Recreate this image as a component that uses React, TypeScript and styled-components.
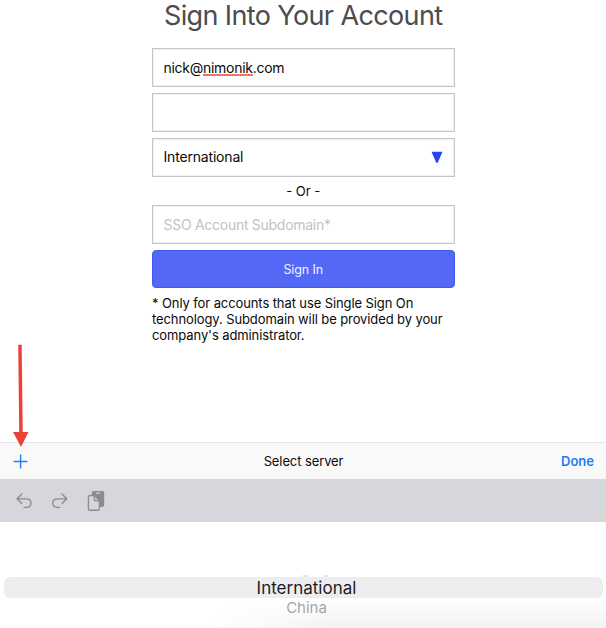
import React from 'react';
import styled, { createGlobalStyle } from 'styled-components';

const GlobalStyle = createGlobalStyle`
  * { box-sizing: border-box; }
  html, body { margin: 0; padding: 0; background: #fff; overflow: hidden; }
  body { font-family: Inter, "Liberation Sans", sans-serif; color: #0a0a0a; }
`;

const Screen = styled.div`
  position: relative;
  display: flex;
  flex-direction: column;
  width: 606px;
  height: 628px;
  overflow: hidden;
  background: #fff;
`;

const SignIn = styled.main`
  display: flex;
  flex-direction: column;
  width: 302.5px;
  height: 442px;
  margin-left: 152px;
`;

const Title = styled.h1`
  margin: 0 0 15px;
  height: 33px;
  font-size: 27px;
  line-height: 31px;
  font-weight: 400;
  letter-spacing: -0.62px;
  text-align: center;
  white-space: nowrap;
  color: #4c4c4e;
`;

const Field = styled.div<{ $last?: boolean; $muted?: boolean; $tracking?: number }>`
  display: flex;
  align-items: center;
  justify-content: space-between;
  flex: none;
  height: 39px;
  margin-bottom: ${(p) => (p.$last ? 0 : 6)}px;
  padding: 0 11px ${(p) => (p.$last ? 2 : 0)}px 10.5px;
  border: 1px solid #c6c6c6;
  outline: 1px solid #f0f0f0;
  outline-offset: -2px;
  font-size: 14px;
  letter-spacing: ${(p) => p.$tracking ?? -0.28}px;
  color: ${(p) => (p.$muted ? '#c2c2c4' : '#0a0a0a')};
`;

const Misspelled = styled.span`
  background: radial-gradient(circle, #f04848 0.9px, transparent 1.2px) 0 100% / 2.6px 2px repeat-x;
`;

const Divider = styled.div`
  height: 28px;
  line-height: 28px;
  font-size: 13px;
  text-align: center;
`;

const SubmitButton = styled.button`
  flex: none;
  height: 38px;
  margin: 0;
  padding: 0;
  border: 1px solid #405af0;
  border-radius: 4px;
  background: #5468f6;
  color: #f2f4ff;
  font-family: inherit;
  font-size: 12.5px;
  letter-spacing: -0.1px;
`;

const Note = styled.p`
  margin: 7px 0 0;
  font-size: 13px;
  line-height: 16.2px;
  letter-spacing: -0.1px;
  white-space: nowrap;
`;

const Accessory = styled.header`
  display: grid;
  grid-template-columns: 1fr auto 1fr;
  align-items: center;
  flex: none;
  height: 37px;
  padding: 0 12px 0 13px;
  border-top: 1px solid #e6e6e7;
  background: #f9f9f9;
  font-size: 13px;
  line-height: 16px;
  letter-spacing: -0.1px;
`;

const AccessoryTitle = styled.span`
  padding-bottom: 1px;
`;

const Done = styled.span`
  justify-self: end;
  padding-bottom: 1px;
  font-weight: 600;
  letter-spacing: 0;
  color: #237bf7;
`;

const EditBar = styled.div`
  display: flex;
  flex: none;
  height: 43px;
  background: #d6d7dc;
`;

const Picker = styled.section`
  position: relative;
  flex: 1;
  padding-top: 53px;
  text-align: center;
`;

const Shade = styled.div`
  position: absolute;
  right: 0;
  bottom: 0;
  width: 396px;
  height: 30px;
  background: linear-gradient(to bottom, rgba(0, 0, 0, 0), rgba(0, 0, 0, 0.05));
  mask-image: linear-gradient(to right, transparent, #000 120px);
`;

const ClippedOption = styled.svg`
  display: block;
  margin: 0 auto;
`;

const Selected = styled.div`
  height: 21px;
  margin: 0 3px 0 4px;
  padding-left: 6px;
  border-radius: 6px;
  background: #ededef;
  font-size: 17px;
  line-height: 23px;
  color: #1c1c1e;
`;

const Option = styled.div`
  position: relative;
  height: 20px;
  padding-left: 7px;
  line-height: 19px;
  font-size: 15px;
  color: #a5a5a7;
`;

const Arrow = styled.svg`
  position: absolute;
  left: 10px;
  top: 342px;
`;

export default function App() {
  return (
    <>
      <GlobalStyle />
      <Screen>
        <SignIn>
          <Title>Sign Into Your Account</Title>
          <Field>
            <span>nick@<Misspelled>nimonik</Misspelled>.com</span>
          </Field>
          <Field />
          <Field $last $tracking={-0.18}>
            <span>International</span>
            <svg width="12" height="12" viewBox="0 0 12 12">
              <path d="M0.5 .8H11.5L7 11.2Q6 12.4 5 11.2Z" fill="#2745f5" />
            </svg>
          </Field>
          <Divider>- Or -</Divider>
          <Field $muted>SSO Account Subdomain*</Field>
          <SubmitButton>Sign In</SubmitButton>
          <Note>
            * Only for accounts that use Single Sign On<br />
            technology. Subdomain will be provided by your<br />
            company's administrator.
          </Note>
        </SignIn>
        <Accessory>
          <svg width="15" height="15" viewBox="0 0 15 15" stroke="#237bf7" strokeWidth="1.4">
            <path d="M.7 7.5H14.5M7.6 .5V14.4" />
          </svg>
          <AccessoryTitle>Select server</AccessoryTitle>
          <Done>Done</Done>
        </Accessory>
        <EditBar>
          <svg width="120" height="43" viewBox="0 479 120 43" fill="none" stroke="#8b8b90" strokeWidth="1.35" strokeLinecap="round" strokeLinejoin="round">
            <path d="M21.8 494L17 498.8L21.8 503.5M17.3 498.8H26.5C29.5 498.8 31 500.7 31 503C31 505.5 29.3 507.3 26.5 507.3H24" />
            <path d="M62 494L66.8 498.8L62 503.5M66.5 498.8H57.3C54.3 498.8 52.8 500.7 52.8 503C52.8 505.5 54.5 507.3 57.3 507.3H59.7" />
            <path d="M93.5 491H102.3Q104.2 491 104.2 493V505Q104.2 507 102.3 507H98L91.8 500V493Q91.8 491 93.5 491Z" fill="#8b8b90" stroke="none" />
            <path d="M96.3 493.1H99.8" stroke="#d6d7dc" strokeWidth="1.1" />
            <path d="M90 495.5H94.5L99.4 500.5V508.5Q99.4 510.2 97.7 510.2H90Q88.4 510.2 88.4 508.5V497.2Q88.4 495.5 90 495.5Z" fill="#d6d7dc" />
            <path d="M94.3 495.8V499.3Q94.3 500.8 95.8 500.8H99.2" />
          </svg>
        </EditBar>
        <Picker>
          <Shade />
          <ClippedOption width="50" height="2" viewBox="278 575 50 2" fill="none" stroke="#c9c9cb">
            <path d="M303 576H308M324 576H329" />
          </ClippedOption>
          <Selected>International</Selected>
          <Option>China</Option>
        </Picker>
        <Arrow width="22" height="108" viewBox="10 342 22 108" fill="#ec4137">
          <path d="M18.2 344.7H21.7L22.7 432H28.5L21 447L13 432H19.2Z" />
        </Arrow>
      </Screen>
    </>
  );
}
